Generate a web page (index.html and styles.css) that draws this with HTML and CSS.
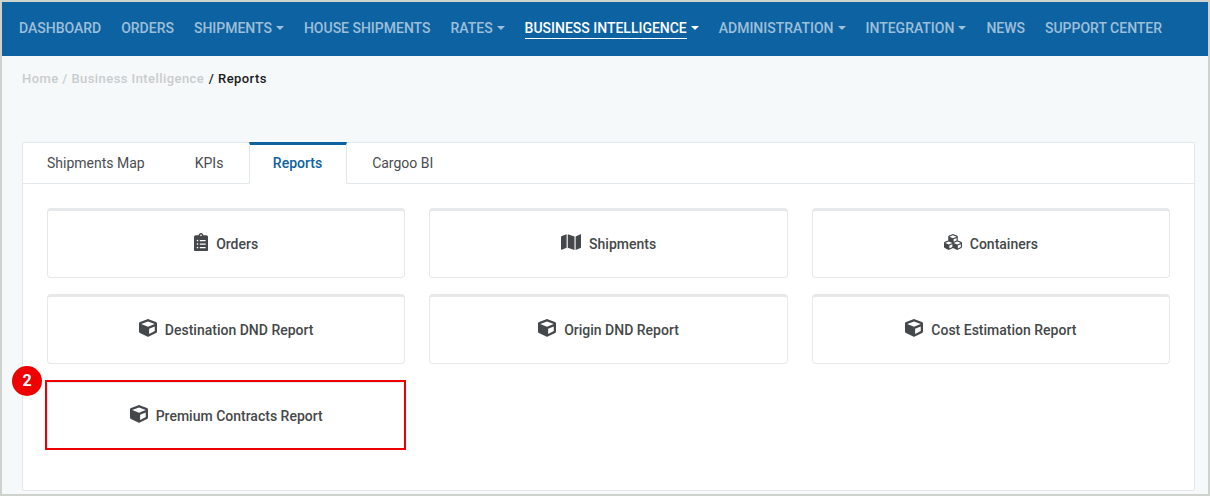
FILE: index.html
```html
<!DOCTYPE html>
<html lang="en">
<head>
<meta charset="utf-8">
<title>Reports</title>
<link rel="stylesheet" href="styles.css">
</head>
<body>
<svg class="sprites" aria-hidden="true">
  <symbol id="i-cube" viewBox="0 0 512 512"><path d="M239.1 6.3l-208 78c-18.7 7-31.1 25-31.1 45v225.1c0 18.2 10.3 34.8 26.5 42.9l208 104c13.5 6.8 29.4 6.8 42.9 0l208-104c16.3-8.1 26.5-24.8 26.5-42.9V129.3c0-20-12.4-37.9-31.1-44.9l-208-78C262 2.2 250 2.2 239.1 6.3zM256 68.4l192 72v1.1l-192 78-192-78v-1.1l192-72zm32 356V275.5l160-65v133.9l-160 80z"/></symbol>
  <symbol id="i-list" viewBox="0 0 384 512"><path d="M336 64h-80c0-35.3-28.7-64-64-64s-64 28.7-64 64H48C21.5 64 0 85.5 0 112v352c0 26.5 21.5 48 48 48h288c26.5 0 48-21.5 48-48V112c0-26.5-21.5-48-48-48zM96 424c-13.3 0-24-10.7-24-24s10.7-24 24-24 24 10.7 24 24-10.7 24-24 24zm0-96c-13.3 0-24-10.7-24-24s10.7-24 24-24 24 10.7 24 24-10.7 24-24 24zm0-96c-13.3 0-24-10.7-24-24s10.7-24 24-24 24 10.7 24 24-10.7 24-24 24zm96-192c13.3 0 24 10.7 24 24s-10.7 24-24 24-24-10.7-24-24 10.7-24 24-24zm128 368c0 4.4-3.6 8-8 8H168c-4.4 0-8-3.6-8-8v-16c0-4.4 3.6-8 8-8h144c4.4 0 8 3.6 8 8v16zm0-96c0 4.4-3.6 8-8 8H168c-4.4 0-8-3.6-8-8v-16c0-4.4 3.6-8 8-8h144c4.4 0 8 3.6 8 8v16zm0-96c0 4.4-3.6 8-8 8H168c-4.4 0-8-3.6-8-8v-16c0-4.4 3.6-8 8-8h144c4.4 0 8 3.6 8 8v16z"/></symbol>
  <symbol id="i-map" viewBox="0 0 576 512"><path d="M0 117.66v346.32c0 11.32 11.43 19.06 21.94 14.86L160 416V32L20.12 87.95A32.006 32.006 0 0 0 0 117.66zM192 416l192 64V96L192 32v384zM554.06 33.16L416 96v384l139.88-55.95A31.996 31.996 0 0 0 576 394.34V48.02c0-11.32-11.43-19.06-21.94-14.86z"/></symbol>
  <symbol id="i-cubes" viewBox="0 0 512 512"><path d="M488.6 250.2L392 214V105.5c0-15-9.3-28.4-23.4-33.7l-100-37.5c-8.1-3.1-17.1-3.1-25.3 0l-100 37.5c-14.1 5.3-23.4 18.7-23.4 33.7V214l-96.6 36.2C9.3 255.5 0 268.9 0 283.9V394c0 13.6 7.7 26.1 19.9 32.2l100 50c10.1 5.1 22.1 5.1 32.2 0l103.9-52 103.9 52c10.1 5.1 22.1 5.1 32.2 0l100-50c12.2-6.1 19.9-18.6 19.9-32.2V283.9c0-15-9.3-28.4-23.4-33.7zM358 214.8l-85 31.9v-68.2l85-37v73.3zM154 104.1l102-38.2 102 38.2v.6l-102 41.4-102-41.4v-.6zm84 291.1l-85 42.5v-79.1l85-38.8v75.4zm0-112l-102 41.4-102-41.4v-.6l102-38.2 102 38.2v.6zm240 112l-85 42.5v-79.1l85-38.8v75.4zm0-112l-102 41.4-102-41.4v-.6l102-38.2 102 38.2v.6z"/></symbol>
</svg>
<div class="frame">
  <nav class="nav">
    <a class="nav-item">Dashboard</a>
    <a class="nav-item">Orders</a>
    <a class="nav-item has-caret">Shipments</a>
    <a class="nav-item">House Shipments</a>
    <a class="nav-item has-caret">Rates</a>
    <a class="nav-item has-caret active"><span class="nav-label">Business Intelligence</span></a>
    <a class="nav-item has-caret">Administration</a>
    <a class="nav-item has-caret">Integration</a>
    <a class="nav-item">News</a>
    <a class="nav-item">Support Center</a>
  </nav>
  <div class="crumbs"><span class="crumb-muted">Home / Business Intelligence</span> <span class="crumb-tail">/ Reports</span></div>
  <section class="card">
    <div class="tabs">
      <a class="tab">Shipments Map</a>
      <a class="tab">KPIs</a>
      <a class="tab current">Reports</a>
      <a class="tab">Cargoo BI</a>
    </div>
    <div class="tiles">
      <a class="tile"><svg class="ico ico-list"><use href="#i-list"/></svg>Orders</a>
      <a class="tile"><svg class="ico ico-map"><use href="#i-map"/></svg>Shipments</a>
      <a class="tile"><svg class="ico"><use href="#i-cubes"/></svg>Containers</a>
      <a class="tile"><svg class="ico"><use href="#i-cube"/></svg>Destination DND Report</a>
      <a class="tile"><svg class="ico"><use href="#i-cube"/></svg>Origin DND Report</a>
      <a class="tile"><svg class="ico"><use href="#i-cube"/></svg>Cost Estimation Report</a>
      <a class="tile marked"><svg class="ico"><use href="#i-cube"/></svg>Premium Contracts Report<span class="mark-box"></span><span class="mark-badge">2</span></a>
    </div>
  </section>
</div>
</body>
</html>
```
FILE: styles.css
```css
* { box-sizing: border-box; }
html, body { margin: 0; padding: 0; }
body { font-family: Roboto, "Liberation Sans", sans-serif; overflow: hidden; }
.sprites { display: none; }
.frame {
  height: 496px;
  border: 2px solid #cfd3cd;
  background: #f5f9fa;
  display: flex;
  flex-direction: column;
}
.nav {
  height: 54px;
  flex: none;
  background: #0d62a2;
  display: flex;
  align-items: center;
  gap: 20px;
  padding: 0 0 2px 17px;
}
.nav-item {
  font-size: 14px;
  font-weight: 500;
  line-height: 20px;
  letter-spacing: -.01px;
  text-transform: uppercase;
  color: rgba(255, 255, 255, .6);
  white-space: nowrap;
}
.has-caret::after {
  content: "";
  display: inline-block;
  margin-left: 4px;
  vertical-align: 3px;
  border-top: 4.2px solid currentColor;
  border-left: 4.2px solid transparent;
  border-right: 4.2px solid transparent;
}
.active { color: #fff; }
.nav-label { display: inline-block; border-bottom: 1px solid #fff; line-height: 19px; margin-top: 1px; }
.crumbs {
  height: 86px;
  flex: none;
  padding: 15px 0 0 20px;
  font-size: 13px;
  line-height: 16px;
  font-weight: 500;
  letter-spacing: .43px;
  color: #1b1b1b;
}
.crumb-muted { color: #c9cccd; }
.crumb-tail { margin-left: 1px; }
.card {
  margin-left: 20px;
  width: 1173px;
  height: 349px;
  background: #fff;
  border: 1px solid #e3e8ec;
  border-radius: 2px;
}
.tabs {
  height: 41px;
  display: flex;
  margin-left: -1px;
  border-bottom: 1px solid #e3e8ec;
}
.tab {
  padding: 0 25px;
  font-size: 14px;
  color: #4a4d50;
  border-top: 3px solid transparent;
  line-height: 37px;
  margin-top: -1px;
  height: 42px;
}
.tab.current {
  color: #0d62a2;
  font-weight: 500;
  margin-left: .5px;
  padding: 0 24px 0 23px;
  background: #fff;
  border-top-color: #0d62a2;
  border-left: 1px solid #e3e8ec;
  border-right: 1px solid #e3e8ec;
  border-bottom: 1px solid #fff;
}
.tiles {
  display: grid;
  grid-template-columns: repeat(3, 358.33px);
  grid-auto-rows: 70px;
  column-gap: 24px;
  row-gap: 16px;
  padding: 24px 0 0 24px;
}
.tile {
  position: relative;
  display: flex;
  align-items: center;
  justify-content: center;
  gap: 8px;
  background: #fff;
  border: 1px solid #e7e8e9;
  border-top: 3px solid #e7e8e9;
  border-radius: 4px;
  font-size: 14px;
  font-weight: 500;
  color: #45484a;
}
.ico { width: 18px; height: 18px; fill: #45484a; flex: none; margin-top: -4px; }
.ico-list { width: 14px; height: 18.7px; }
.ico-map { width: 20.25px; }
.mark-box {
  position: absolute;
  top: -3px;
  left: -3px;
  right: -2px;
  bottom: -1px;
  border: 2px solid #ee0000;
}
.mark-badge {
  position: absolute;
  top: -17px;
  left: -36px;
  width: 30px;
  height: 30px;
  border-radius: 50%;
  background: #ee0000;
  color: #fff;
  font-size: 16px;
  font-weight: 700;
  line-height: 30px;
  text-align: center;
}
```
